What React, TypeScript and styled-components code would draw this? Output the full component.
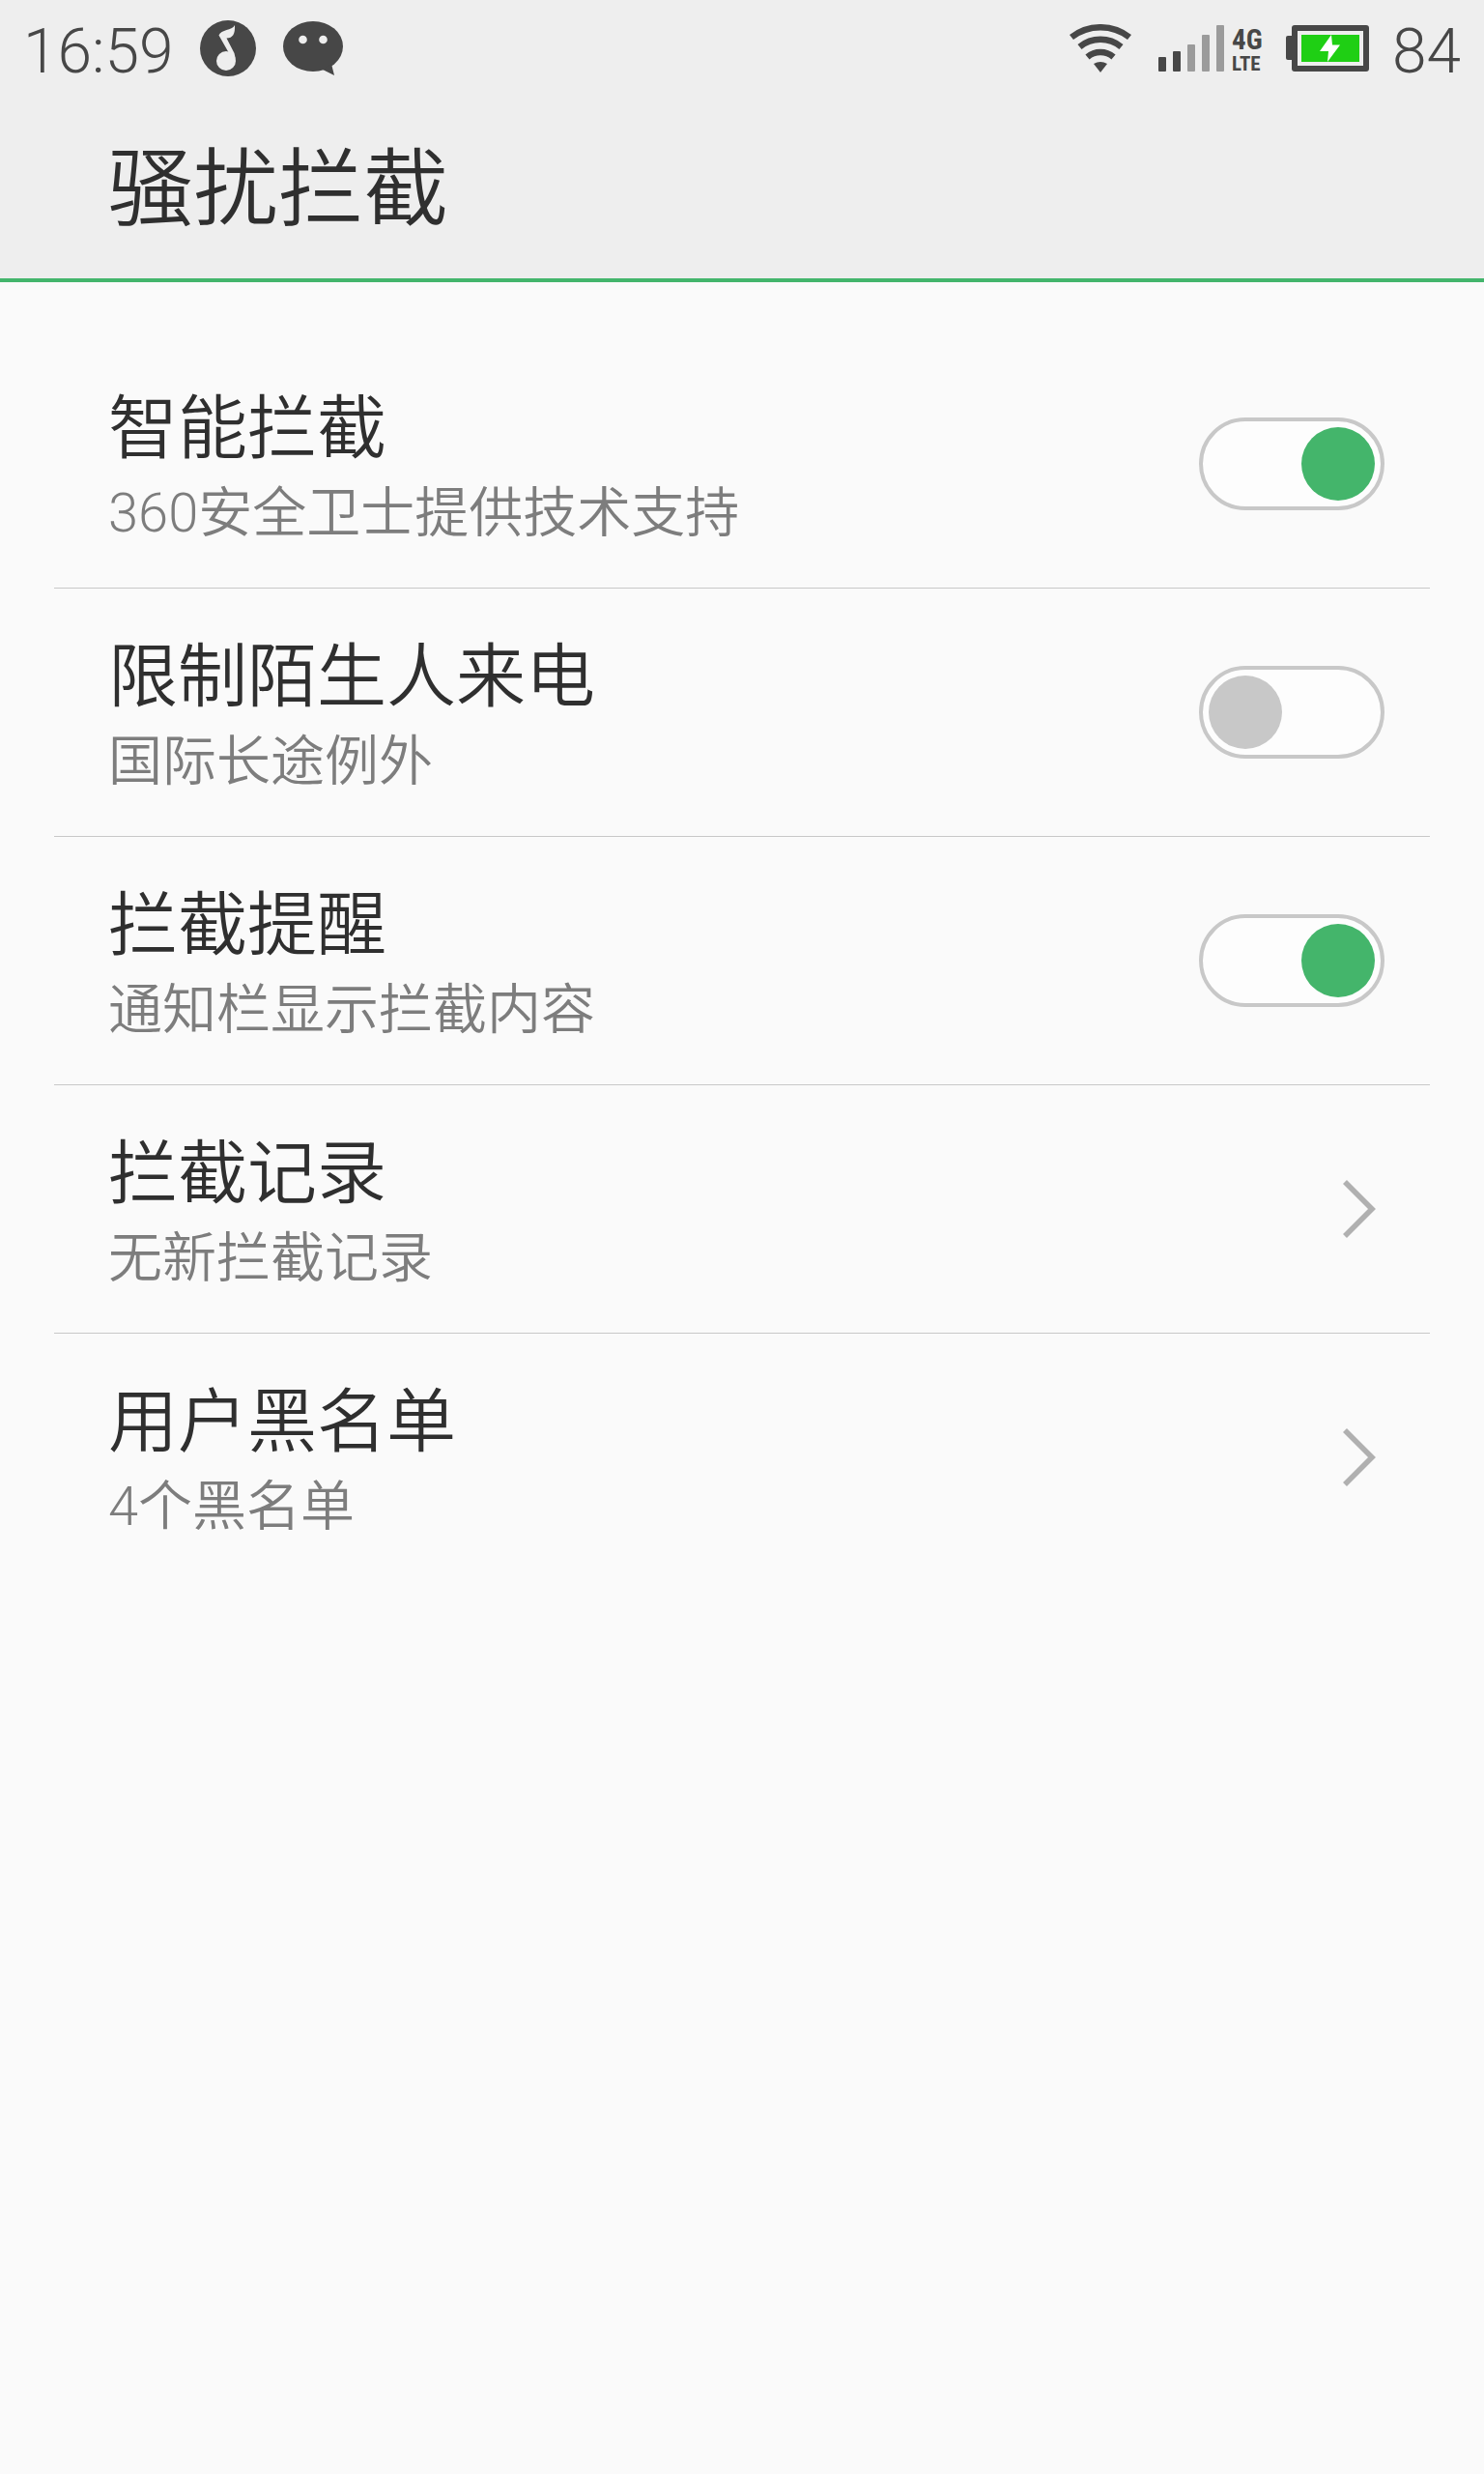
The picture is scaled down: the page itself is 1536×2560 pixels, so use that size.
import React, { useId, useState } from "react";
import styled, { createGlobalStyle } from "styled-components";

const GlobalStyle = createGlobalStyle`
  * { box-sizing: border-box; }
  body {
    margin: 0;
    background: #fafafa;
    color: #2f2f2f;
    font-family: Roboto, "Noto Sans CJK SC", sans-serif;
    font-weight: 350;
  }
`;

const Screen = styled.div`
  min-height: 100vh;
  background: #fafafa;
`;

const Header = styled.header`
  background: #eeeeee;
  border-bottom: 4px solid #43b56c;
`;

const StatusBar = styled.div`
  display: flex;
  align-items: center;
  justify-content: space-between;
  height: 100px;
  padding: 0 24px;
  color: #474747;
`;

const StatusGroup = styled.div`
  display: flex;
  align-items: center;
`;

const StatusText = styled.span<{ $gap?: number }>`
  margin-left: ${(p) => p.$gap ?? 0}px;
  padding-top: 8px;
  font-size: 64px;
  font-weight: 300;
  line-height: 72px;
`;

const StatusIcon = styled.svg<{ $gap: number }>`
  display: block;
  flex: none;
  margin-left: ${(p) => p.$gap}px;
`;

const Network = styled.div`
  display: flex;
  flex-direction: column;
  width: 32px;
  margin-left: 8px;
  padding-top: 8px;
  font-family: "Roboto Condensed", Roboto, sans-serif;
  font-weight: 700;
`;

const NetworkLine = styled.span<{ $size: number }>`
  font-size: ${(p) => p.$size}px;
  line-height: 25px;
`;

const PageTitle = styled.h1`
  margin: 0;
  padding: 40px 112px 36px;
  font-size: 88px;
  font-weight: 350;
  line-height: 112px;
`;

const List = styled.ul`
  list-style: none;
  margin: 0;
  padding: 60px 56px 0;
`;

const Item = styled.li`
  & + & { border-top: 1px solid #c8c8c8; }
`;

const rowLayout = `
  display: flex;
  align-items: center;
  justify-content: space-between;
  height: 256px;
  padding: 0 47px 0 56px;
  color: inherit;
  text-decoration: none;
  cursor: pointer;
`;

const SwitchRow = styled.label`${rowLayout}`;
const LinkRow = styled.a`${rowLayout}`;

const Copy = styled.span`
  display: flex;
  flex-direction: column;
  padding-top: 8px;
`;

const Name = styled.span`
  font-size: 72px;
  line-height: 94px;
`;

const Detail = styled.span`
  color: #7d7d7d;
  font-size: 56px;
  line-height: 80px;
`;

const Digits = styled.span`
  font-weight: 300;
`;

const Switch = styled.input`
  appearance: none;
  display: flex;
  align-items: center;
  flex: none;
  width: 192px;
  height: 96px;
  margin: 0;
  padding: 0 6px;
  border: 4px solid #c8c8c8;
  border-radius: 48px;
  background: #fdfdfd;
  cursor: pointer;

  &::before {
    content: "";
    width: 76px;
    height: 76px;
    border-radius: 50%;
    background: #c8c8c8;
  }
  &:checked { justify-content: flex-end; }
  &:checked::before { background: #44b56b; }
`;

const Chevron = styled.svg`
  display: block;
  flex: none;
  margin-right: 8px;
`;

type Entry = { name: string; count?: string; detail: string; on?: boolean };

const entries: Entry[] = [
  { name: "智能拦截", count: "360", detail: "安全卫士提供技术支持", on: true },
  { name: "限制陌生人来电", detail: "国际长途例外", on: false },
  { name: "拦截提醒", detail: "通知栏显示拦截内容", on: true },
  { name: "拦截记录", detail: "无新拦截记录" },
  { name: "用户黑名单", count: "4", detail: "个黑名单" },
];

function Label({ name, count, detail }: Entry) {
  return (
    <Copy>
      <Name>{name}</Name>
      <Detail>
        {count && <Digits>{count}</Digits>}
        {detail}
      </Detail>
    </Copy>
  );
}

function SwitchEntry(entry: Entry) {
  const id = useId();
  const [on, setOn] = useState(!!entry.on);
  return (
    <SwitchRow htmlFor={id}>
      <Label {...entry} />
      <Switch id={id} type="checkbox" checked={on} onChange={() => setOn(!on)} />
    </SwitchRow>
  );
}

function LinkEntry(entry: Entry) {
  return (
    <LinkRow href="#">
      <Label {...entry} />
      <Chevron width="35" height="60" viewBox="0 0 35 60" aria-hidden="true">
        <path d="M2 2L30 30L2 58" fill="none" stroke="#b0b0b0" strokeWidth="5.6" />
      </Chevron>
    </LinkRow>
  );
}

function MusicIcon() {
  return (
    <StatusIcon $gap={28} width="58" height="58" viewBox="0 0 58 58" aria-hidden="true">
      <circle cx="29" cy="29" r="29" fill="#474747" />
      <circle cx="27" cy="42" r="10" fill="#eee" />
      <path d="M36 5C36.5 14 34 18.5 27.5 18.5L35.5 34Q37.5 39 36 44L30 34L19.5 15.5C22 9 33 11 36 5Z" fill="#eee" />
    </StatusIcon>
  );
}

function ChatIcon() {
  return (
    <StatusIcon $gap={28} width="62" height="56" viewBox="0 0 62 56" aria-hidden="true">
      <ellipse cx="31" cy="26" rx="31" ry="26" fill="#474747" />
      <path d="M41 50L53 56L50 44Z" fill="#474747" />
      <circle cx="20.5" cy="19" r="4.3" fill="#eee" />
      <circle cx="41.5" cy="19" r="4.3" fill="#eee" />
    </StatusIcon>
  );
}

function WifiIcon() {
  return (
    <StatusIcon $gap={0} width="64" height="50" viewBox="0 0 64 50" aria-hidden="true">
      <g fill="none" stroke="#474747" strokeWidth="6.5">
        <path d="M2 13.5A49 49 0 0 1 62 13.5" />
        <path d="M10.5 23.5A34 34 0 0 1 53.5 23.5" />
        <path d="M18.5 34A21 21 0 0 1 45.5 34" />
      </g>
      <path d="M25 41Q32 37 39 41L32 50Z" fill="#474747" />
    </StatusIcon>
  );
}

function SignalIcon() {
  const tops = [33, 27, 20, 10, 0];
  return (
    <StatusIcon $gap={28} width="68" height="48" viewBox="0 0 68 48" aria-hidden="true">
      {tops.map((y, i) => (
        <rect key={y} x={i * 15} y={y} width="8" height={48 - y} rx="1" fill={i < 2 ? "#474747" : "#9b9b9b"} />
      ))}
    </StatusIcon>
  );
}

function BatteryIcon() {
  return (
    <StatusIcon $gap={24} width="86" height="48" viewBox="0 0 86 48" aria-hidden="true">
      <rect y="11" width="10" height="25" rx="2" fill="#474747" />
      <rect x="9" y="3" width="74" height="42" fill="#eee" stroke="#474747" strokeWidth="6" strokeLinejoin="round" />
      <rect x="16" y="10" width="60" height="28" fill="#1fcf14" />
      <path d="M47 10L35 27H44L43 38L56 20.5H48Z" fill="#fff" />
    </StatusIcon>
  );
}

export default function App() {
  return (
    <Screen>
      <GlobalStyle />
      <Header>
        <StatusBar>
          <StatusGroup>
            <StatusText>16:59</StatusText>
            <MusicIcon />
            <ChatIcon />
          </StatusGroup>
          <StatusGroup>
            <WifiIcon />
            <SignalIcon />
            <Network>
              <NetworkLine $size={29}>4G</NetworkLine>
              <NetworkLine $size={21}>LTE</NetworkLine>
            </Network>
            <BatteryIcon />
            <StatusText $gap={24}>84</StatusText>
          </StatusGroup>
        </StatusBar>
        <PageTitle>骚扰拦截</PageTitle>
      </Header>
      <main>
        <List>
          {entries.map((entry) => (
            <Item key={entry.name}>
              {entry.on === undefined ? <LinkEntry {...entry} /> : <SwitchEntry {...entry} />}
            </Item>
          ))}
        </List>
      </main>
    </Screen>
  );
}
